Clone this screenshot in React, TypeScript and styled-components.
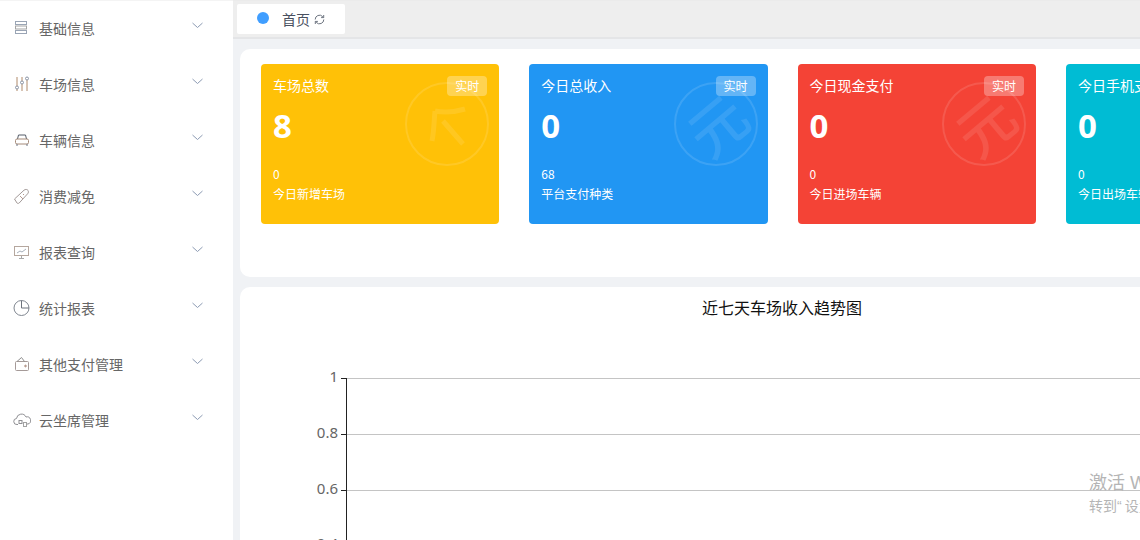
import React from "react";
import styled, { createGlobalStyle } from "styled-components";

const GlobalStyle = createGlobalStyle`
  html, body { margin: 0; padding: 0; background: #f0f2f5; }
  body { font-family: "Liberation Sans", "Noto Sans CJK SC", sans-serif; }
  * { box-sizing: border-box; }
`;

const Page = styled.div`
  position: relative;
  display: flex;
  width: 1140px;
  height: 540px;
  overflow: hidden;
`;

const Sidebar = styled.nav`
  flex: none;
  width: 233px;
  height: 100%;
  background: #fff;
  border-top: 1px solid #f4f4f4;
`;

const MenuRow = styled.div`
  display: flex;
  align-items: center;
  height: 56px;
  padding: 0 30px 2px 13px;
`;

const MenuIcon = styled.svg`
  flex: none;
  width: 18px;
  height: 18px;
  margin-right: 8px;
  fill: none;
  stroke: #8f949c;
  stroke-width: 1;
`;

const MenuLabel = styled.span`
  flex: 1;
  font-size: 14px;
  line-height: 20px;
  color: #666;
  font-family: "Noto Sans CJK SC", sans-serif;
`;

const Chevron = styled.svg`
  flex: none;
  width: 11px;
  height: 7px;
  margin-top: -5px;
  fill: none;
  stroke: #8c9bb3;
  stroke-width: 1;
`;

const Main = styled.main`
  flex: 1;
  min-width: 0;
  display: flex;
  flex-direction: column;
`;

const TabBar = styled.div`
  flex: none;
  height: 39px;
  padding: 3px 0 0 4px;
  background: #eeeeee;
  border-top: 1px solid #ebebeb;
  border-bottom: 2px solid #e4e5e7;
`;

const Tab = styled.div`
  display: flex;
  align-items: center;
  width: 108px;
  height: 30px;
  padding-left: 20px;
  background: #fff;
  border-radius: 2px;
`;

const TabDot = styled.span`
  width: 12px;
  height: 12px;
  margin-top: -2px;
  border-radius: 50%;
  background: #409eff;
`;

const TabLabel = styled.span`
  margin-left: 13px;
  font-size: 14px;
  line-height: 20px;
  color: #495060;
  font-family: "Noto Sans CJK SC", sans-serif;
`;

const RefreshIcon = styled.svg`
  width: 11px;
  height: 11px;
  margin-left: 4px;
  fill: none;
  stroke: #6d7480;
  stroke-width: 1;
`;

const Content = styled.div`
  flex: 1;
  display: flex;
  flex-direction: column;
  gap: 10px;
  width: 1100px;
  padding: 10px 0 0 7px;
  background: #f0f2f5;
`;

const StatsPanel = styled.section`
  flex: none;
  display: flex;
  gap: 30px;
  width: 1084px;
  height: 228px;
  padding: 15px 21px;
  background: #fff;
  border-radius: 10px;
`;

const StatCard = styled.article<{ $bg: string }>`
  position: relative;
  flex: none;
  width: 238.3px;
  height: 160px;
  padding: 11px 12px;
  background: ${(p) => p.$bg};
  border-radius: 4px;
  color: #fff;
  font-family: "Noto Sans CJK SC", sans-serif;
`;

const CardHead = styled.div`
  display: flex;
  justify-content: space-between;
  align-items: flex-start;
  height: 20px;
`;

const CardTitle = styled.span`
  font-size: 14px;
  line-height: 20px;
`;

const Badge = styled.span`
  position: relative;
  z-index: 1;
  width: 40px;
  height: 20px;
  margin-top: 1px;
  text-align: center;
  font-size: 12px;
  line-height: 20px;
  background: rgba(255, 255, 255, 0.3);
  border-radius: 4px;
`;

const BigNumber = styled.div`
  margin-top: 13px;
  font-family: "Noto Sans", sans-serif;
  font-weight: 700;
  font-size: 33px;
  line-height: 36px;
`;

const SubValue = styled.div`
  margin-top: 20px;
  font-size: 12px;
  line-height: 20px;
`;

const SubLabel = styled.div`
  font-size: 12px;
  line-height: 20px;
`;

const Stamp = styled.svg`
  position: absolute;
  top: 18px;
  right: 10px;
  width: 84px;
  height: 84px;
  fill: none;
  stroke: #fff;
  stroke-opacity: 0.12;
  stroke-width: 2;
`;

const StampChar = styled.text`
  fill: #fff;
  fill-opacity: 0.1;
  stroke: none;
  font-family: "Noto Sans CJK SC", sans-serif;
  font-size: 57px;
  font-weight: 500;
`;

const ChartPanel = styled.section`
  flex: none;
  width: 1084px;
  height: 300px;
  background: #fff;
  border-radius: 10px 10px 0 0;
`;

const ChartTitle = styled.h2`
  margin: 0;
  padding-top: 9px;
  text-align: center;
  font-size: 16px;
  font-weight: 400;
  line-height: 22px;
  color: #111;
  font-family: "Noto Sans CJK SC", sans-serif;
`;

const ChartSvg = styled.svg`
  display: block;
  width: 1084px;
  height: 258px;
`;

const AxisLabel = styled.text`
  font-family: "Noto Sans", sans-serif;
  font-size: 15px;
  fill: #666;
  text-anchor: end;
`;

const Watermark = styled.div`
  position: absolute;
  left: 1089px;
  top: 471px;
  width: 300px;
  white-space: nowrap;
  color: #b5b5b5;
  font-family: "Liberation Sans", "Noto Sans CJK SC", sans-serif;
`;

const WatermarkTitle = styled.div`
  font-size: 18px;
  line-height: 25px;
`;

const WatermarkText = styled.div`
  font-size: 14px;
  line-height: 20px;
`;

const WatermarkQuote = styled.span`
  margin-right: 3px;
`;

const icons: Record<string, React.ReactNode> = {
  server: (
    <>
      <rect x="2.5" y="2.5" width="11" height="3" stroke="#9aa5b5" />
      <rect x="2.5" y="7" width="11" height="3" stroke="#a3a3a3" />
      <rect x="2.5" y="11.5" width="11" height="3" stroke="#9aa5b5" />
    </>
  ),
  sliders: (
    <>
      <path d="M4 2v9M4 14v2M9 2v4M9 9v7M14 5v11" stroke="#b08a6a" />
      <circle cx="4" cy="12.5" r="1.5" stroke="#8a94a5" />
      <circle cx="9" cy="7.5" r="1.5" stroke="#8a94a5" />
      <circle cx="14" cy="3.5" r="1.5" stroke="#8a94a5" />
    </>
  ),
  car: (
    <>
      <path d="M4.5 8l1-4h7l1 4" stroke="#555c68" />
      <rect x="2.5" y="8" width="13" height="5" rx="1.5" stroke="#a58a78" />
      <path d="M4 13v2M14 13v2" stroke="#6f7785" />
    </>
  ),
  tag: (
    <>
      <path d="M1.5 12L11 3.2c1.4-1.2 3.4-.8 4 .2s.6 2.4-.4 3.4L6.2 16c-.8.6-1.6.6-2.2 0z" stroke="#a39a98" />
      <path d="M7 9l3 3M10 7l1 1" stroke="#b59a90" />
    </>
  ),
  monitor: (
    <>
      <rect x="1.5" y="3.5" width="14" height="9" stroke="#b5a79e" />
      <path d="M4 10l3-2 2 1 4-3" stroke="#a8b0ba" />
      <path d="M8.5 13v2M6 15.5h5" stroke="#a8a8a8" />
    </>
  ),
  pie: (
    <>
      <circle cx="8.5" cy="9" r="7.5" stroke="#7f8690" />
      <path d="M8.5 1.5V9H16" stroke="#6d737c" />
    </>
  ),
  wallet: (
    <>
      <rect x="2.5" y="6.5" width="13" height="9" rx="1" stroke="#a59a98" />
      <path d="M4 6.5l4.5-4 3 4" stroke="#8f8f8f" />
      <circle cx="12.5" cy="11" r="0.8" stroke="#a07a6a" />
    </>
  ),
  cloud: (
    <>
      <path d="M5 13.5H4a3 3 0 0 1-.5-6A5 5 0 0 1 13 6a3.6 3.6 0 0 1 2 7h-1" stroke="#8f8f93" />
      <rect x="6" y="9.5" width="3" height="3" stroke="#8f8f93" />
      <rect x="10.5" y="11.5" width="3" height="4" stroke="#a3a3a3" />
    </>
  ),
};

const menu = [
  { label: "基础信息", icon: "server" },
  { label: "车场信息", icon: "sliders" },
  { label: "车辆信息", icon: "car" },
  { label: "消费减免", icon: "tag" },
  { label: "报表查询", icon: "monitor" },
  { label: "统计报表", icon: "pie" },
  { label: "其他支付管理", icon: "wallet" },
  { label: "云坐席管理", icon: "cloud" },
];

const cards = [
  { bg: "#ffc107", title: "车场总数", value: "8", sub: "0", label: "今日新增车场", mark: "plain" },
  { bg: "#2196f3", title: "今日总收入", value: "0", sub: "68", label: "平台支付种类", mark: "元" },
  { bg: "#f44336", title: "今日现金支付", value: "0", sub: "0", label: "今日进场车辆", mark: "元" },
  { bg: "#00bcd4", title: "今日手机支付", value: "0", sub: "0", label: "今日出场车辆", mark: "元" },
];

const ticks = [
  { label: "1", y: 60.5, dy: 3.5 },
  { label: "0.8", y: 116.5, dy: 3.5 },
  { label: "0.6", y: 172.5, dy: 3.5 },
  { label: "0.4", y: 228.5, dy: 2 },
];

export default function App() {
  return (
    <>
      <GlobalStyle />
      <Page>
        <Sidebar>
          {menu.map((m) => (
            <MenuRow key={m.label}>
              <MenuIcon viewBox="0 0 18 18">{icons[m.icon]}</MenuIcon>
              <MenuLabel>{m.label}</MenuLabel>
              <Chevron viewBox="0 0 11 7">
                <path d="M0.5 1l5 4.5 5-4.5" />
              </Chevron>
            </MenuRow>
          ))}
        </Sidebar>
        <Main>
          <TabBar>
            <Tab>
              <TabDot />
              <TabLabel>首页</TabLabel>
              <RefreshIcon viewBox="0 0 11 11">
                <path d="M1.2 5.5a4.3 4.3 0 0 1 7.4-3l1 1M9.8 5.5a4.3 4.3 0 0 1-7.4 3l-1-1" />
                <path d="M9.7 1v2.6H7.1M1.3 10V7.4h2.6" />
              </RefreshIcon>
            </Tab>
          </TabBar>
          <Content>
            <StatsPanel>
              {cards.map((c) => (
                <StatCard key={c.title} $bg={c.bg}>
                  <CardHead>
                    <CardTitle>{c.title}</CardTitle>
                    <Badge>实时</Badge>
                  </CardHead>
                  <BigNumber>{c.value}</BigNumber>
                  <SubValue>{c.sub}</SubValue>
                  <SubLabel>{c.label}</SubLabel>
                  <Stamp viewBox="0 0 84 84">
                    <circle cx="42" cy="42" r="41" />
                    {c.mark === "元" ? (
                      <StampChar
                        x="42"
                        y="62"
                        textAnchor="middle"
                        transform="translate(3 3) rotate(-40 42 42)"
                      >
                        元
                      </StampChar>
                    ) : (
                      <path
                        d="M30 29c10 2 20 1 30-2M30 29c-1 10-1 20-3 30M38 39l20 23"
                        strokeWidth="5"
                        strokeOpacity="0.1"
                      />
                    )}
                  </Stamp>
                </StatCard>
              ))}
            </StatsPanel>
            <ChartPanel>
              <ChartTitle>近七天车场收入趋势图</ChartTitle>
              <ChartSvg viewBox="0 0 1084 258">
                {ticks.map((t) => (
                  <g key={t.label}>
                    <line x1="107" x2="1084" y1={t.y} y2={t.y} stroke="#c4c4c4" />
                    <line x1="101" x2="107" y1={t.y} y2={t.y} stroke="#222" />
                    <AxisLabel x="98" y={t.y + t.dy}>
                      {t.label}
                    </AxisLabel>
                  </g>
                ))}
                <line x1="106.5" x2="106.5" y1="60" y2="258" stroke="#222" />
              </ChartSvg>
            </ChartPanel>
          </Content>
        </Main>
        <Watermark>
          <WatermarkTitle>激活 Windows</WatermarkTitle>
          <WatermarkText>
            转到<WatermarkQuote>“</WatermarkQuote>设置”以激活 Windows。
          </WatermarkText>
        </Watermark>
      </Page>
    </>
  );
}
